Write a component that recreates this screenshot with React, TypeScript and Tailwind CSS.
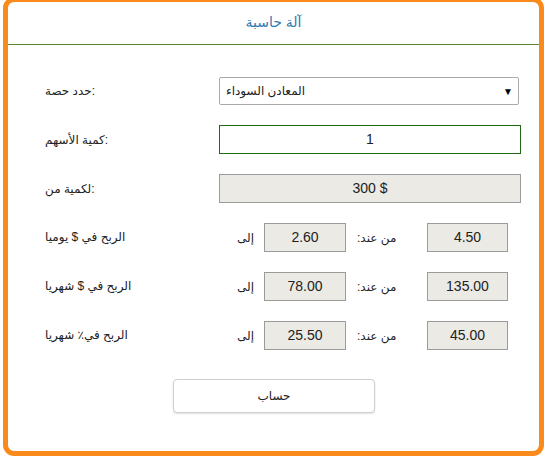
import React from "react";

const font = { fontFamily: '"Liberation Sans", "DejaVu Sans", Arial, sans-serif' };

function GrayBox({ v, className }: { v: string; className?: string }) {
  return (
    <div
      className={
        "flex items-center justify-center h-[29px] border border-[#9b9b9b] bg-[#ebeae5] text-[14px] text-[#222] " +
        (className || "")
      }
    >
      {v}
    </div>
  );
}

function RangeRow({ label, a, b }: { label: string; a: string; b: string }) {
  return (
    <div className="flex items-center h-[29px]">
      <div className="w-[174px] text-[12px] text-[#222] -mt-[2px]">{label}</div>
      <div className="w-[45px] text-[12px] text-[#222] pl-[18px]">إلى</div>
      <GrayBox v={a} className="w-[82px]" />
      <div className="w-[81px] text-[12px] text-[#222] pl-[11px]">
        <span dir="rtl">من عند:</span>
      </div>
      <GrayBox v={b} className="w-[81px]" />
    </div>
  );
}

export default function App() {
  return (
    <div className="w-[560px] h-[458px] bg-white overflow-hidden" style={font}>
      <div className="ml-[3px] -mt-[3px] w-[541px] h-[459px] border-[5px] border-[#fa8a1c] rounded-[11px] bg-white flex flex-col">
        <div className="h-[42px] flex items-center justify-center text-[14px] text-[#2a7ab5] pb-[2px]">
          آلة حاسبة
        </div>
        <div className="h-px bg-[#5a8a2a]" />
        <div className="pl-[37px] pt-[32px] flex flex-col gap-[20px]">
          <div className="flex items-center h-[28px]">
            <div className="w-[174px] text-[12px] text-[#222]">حدد حصة:</div>
            <div className="w-[300px] h-[28px] border border-[#a9a9a9] rounded-[2px] bg-white flex items-center justify-between pl-[6px] pr-[5px] text-[12px] text-[#222]">
              <span>المعادن السوداء</span>
              <span className="text-[10px] text-black">▼</span>
            </div>
          </div>
          <div className="flex items-center h-[29px]">
            <div className="w-[174px] text-[12px] text-[#222]">كمية الأسهم:</div>
            <div className="w-[302px] h-[29px] border border-[#1f6b12] bg-white flex items-center justify-center text-[14px] text-[#222]">
              1
            </div>
          </div>
          <div className="flex items-center h-[29px]">
            <div className="w-[174px] text-[12px] text-[#222]">لكمية من:</div>
            <GrayBox v="300 $" className="w-[302px]" />
          </div>
          <RangeRow label="الربح في $ يوميا" a="2.60" b="4.50" />
          <RangeRow label="الربح في $ شهريا" a="78.00" b="135.00" />
          <RangeRow label="الربح في٪ شهريا" a="25.50" b="45.00" />
        </div>
        <div className="pt-[29px] pl-[165px]">
          <div className="w-[202px] h-[34px] border border-[#cfcfcf] rounded-[4px] bg-white shadow-[0_1px_2px_rgba(0,0,0,0.12)] flex items-center justify-center text-[12px] text-[#222]">
            حساب
          </div>
        </div>
      </div>
    </div>
  );
}
